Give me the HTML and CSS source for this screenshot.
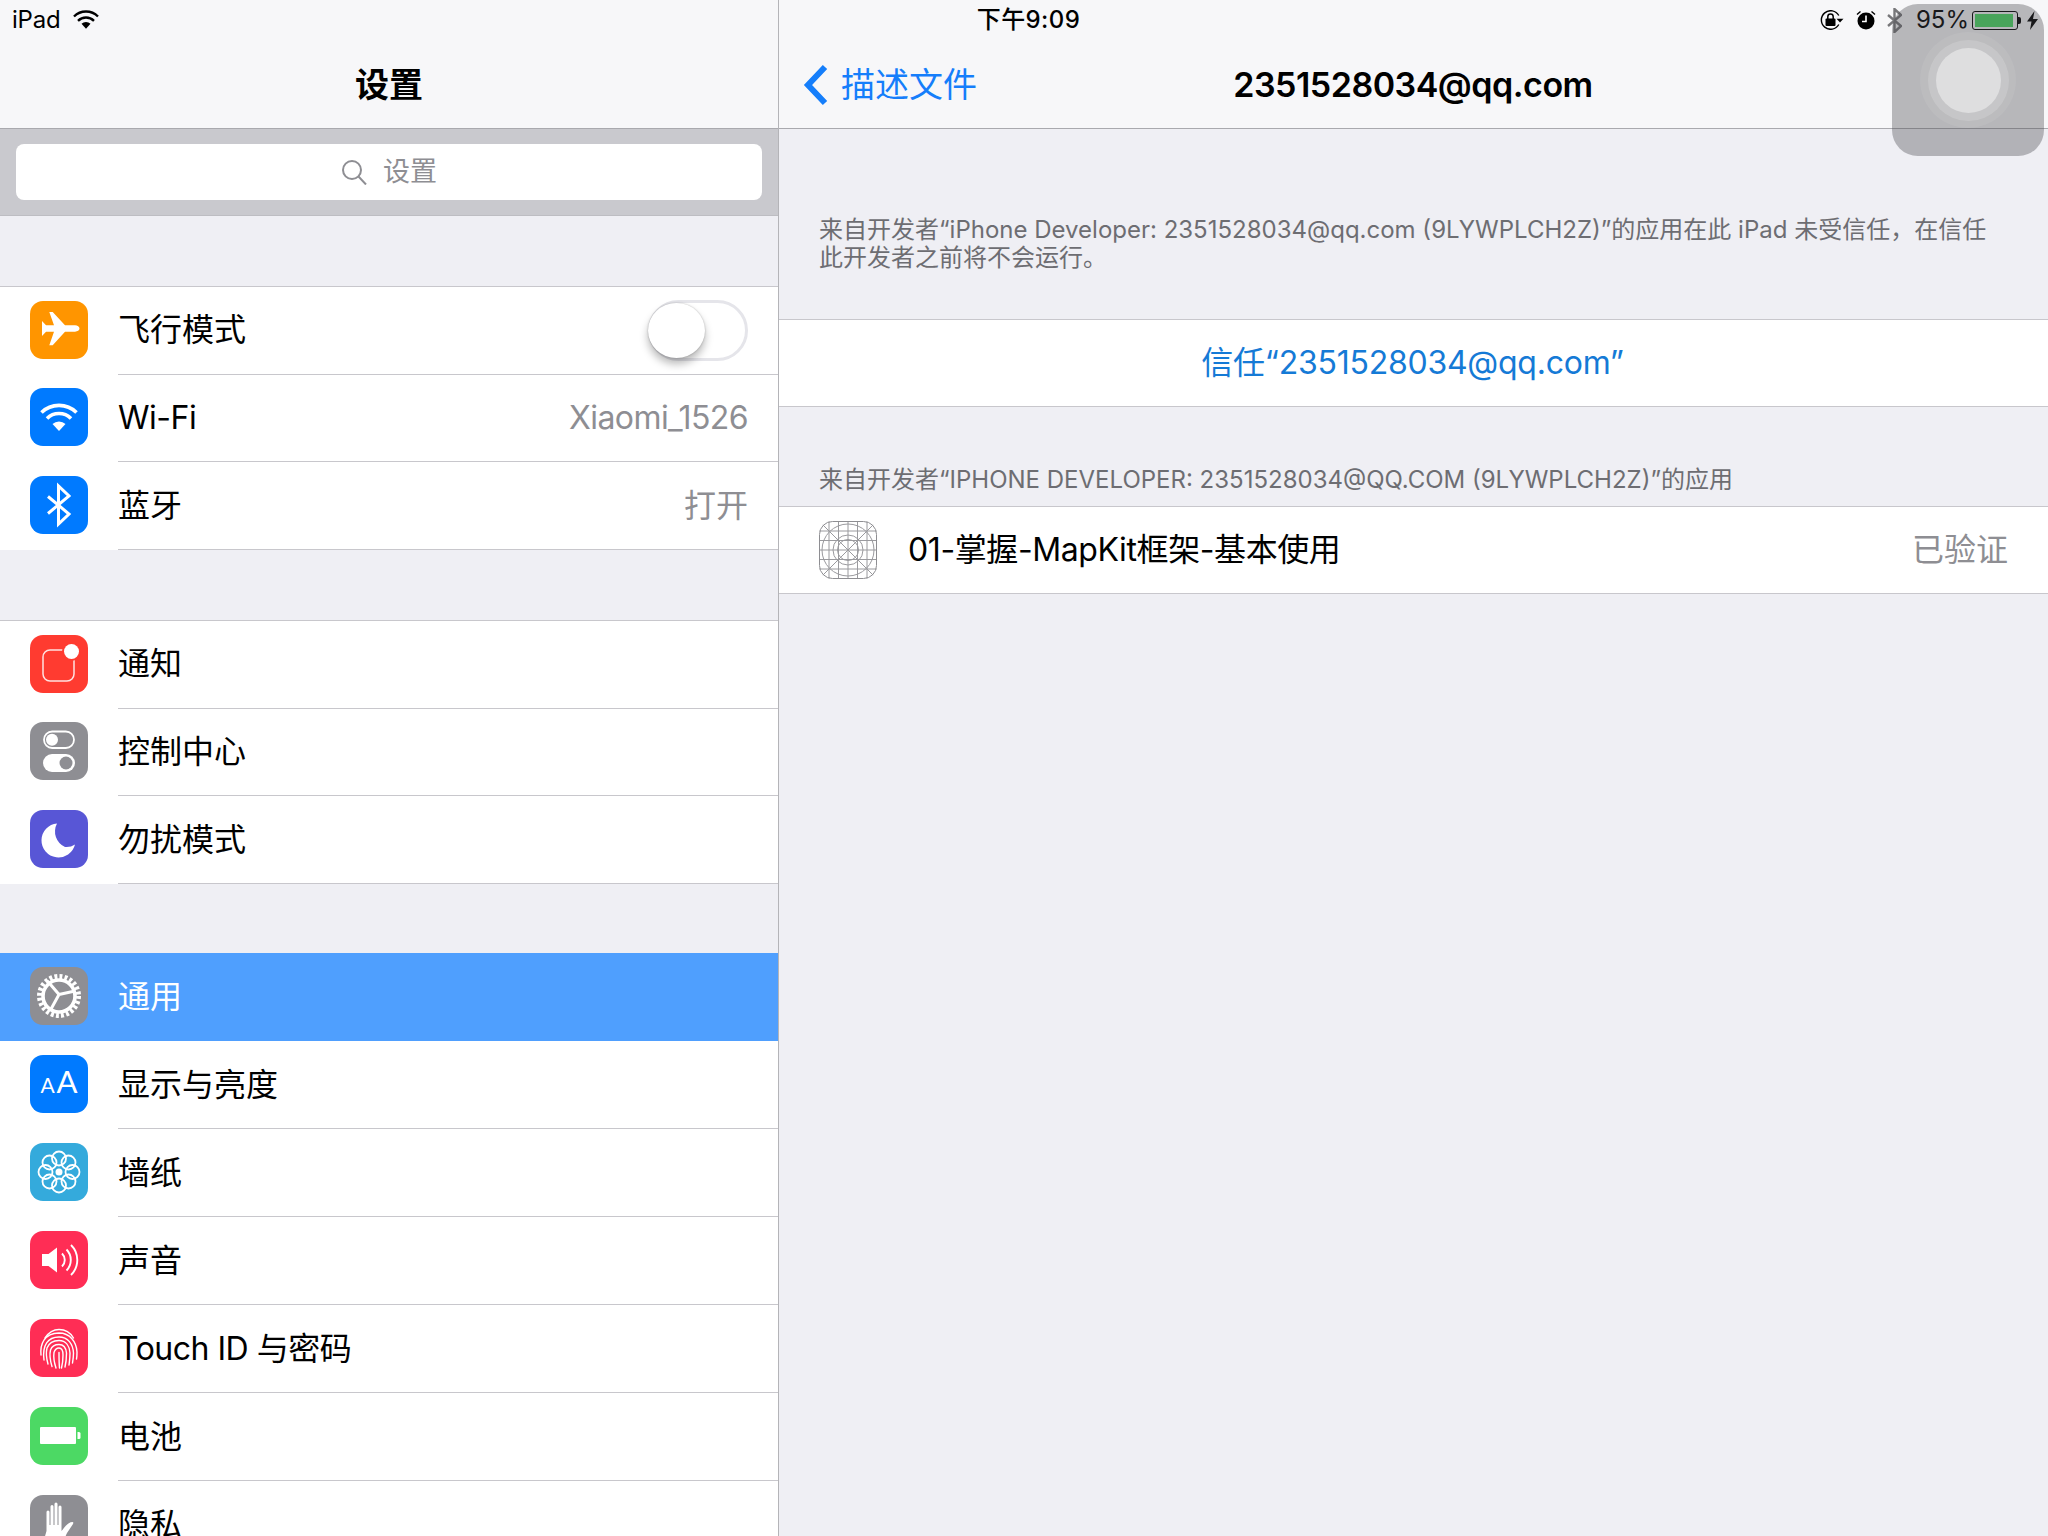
FILE: index.html
```html
<!DOCTYPE html>
<html lang="zh-CN">
<head>
<meta charset="utf-8">
<title>设置</title>
<link rel="stylesheet" href="styles.css">
</head>
<body>
<div class="screen">
  <aside class="master">
    <header class="nav nav-master"><h1 class="nav-title">设置</h1></header>
    <div class="search-wrap">
      <div class="search">
        <svg class="search-glass" viewBox="0 0 26 26"><circle cx="11" cy="11" r="9" fill="none" stroke="#8e8e93" stroke-width="2"/><path d="M17.5 17.500 25 25.500" stroke="#8e8e93" stroke-width="2" fill="none"/></svg>
        <span>设置</span>
      </div>
    </div>

    <section class="group">
      <div class="row">
        <svg class="icon" viewBox="0 0 58 58"><rect width="58" height="58" rx="13" fill="#ff9500"/><path d="M49.500 27.500c0-1.800-2-3-4.500-3.200H35L22.700 11h-3.400L24 24.300h-8L12 20v15l4-4.300h8L19.300 44.300h3.400L35 30.700h10c2.500-.2 4.500-1.400 4.500-3.200z" fill="#fff"/></svg>
        <div class="row-body"><span class="label">飞行模式</span><span class="toggle"><span class="knob"></span></span></div>
      </div>
      <div class="row">
        <svg class="icon" viewBox="0 0 58 58"><rect width="58" height="58" rx="13" fill="#007aff"/><g fill="none" stroke="#fff" stroke-width="3.600"><path d="M11.500 24.500a25 25 0 0 1 35 0"/><path d="M17 30.500a17 17 0 0 1 24 0"/></g><path d="M22.500 36a9.500 9.500 0 0 1 13 0L29 43z" fill="#fff"/></svg>
        <div class="row-body"><span class="label label-latin">Wi-Fi</span><span class="detail detail-latin">Xiaomi_1526</span></div>
      </div>
      <div class="row">
        <svg class="icon" viewBox="0 0 58 58"><rect width="58" height="58" rx="13" fill="#007aff"/><path d="M18 20.500 39 38 28.500 48V10L39 20 18 37.500" fill="none" stroke="#fff" stroke-width="3"/></svg>
        <div class="row-body"><span class="label">蓝牙</span><span class="detail">打开</span></div>
      </div>
    </section>

    <section class="group">
      <div class="row">
        <svg class="icon" viewBox="0 0 58 58"><rect width="58" height="58" rx="13" fill="#ff3b30"/><rect x="13" y="15" width="31" height="31" rx="7" fill="none" stroke="#fff" stroke-width="1.500" opacity=".85"/><circle cx="41.500" cy="16.500" r="9.500" fill="#ff3b30"/><circle cx="41.500" cy="16.500" r="7.500" fill="#fff"/></svg>
        <div class="row-body"><span class="label">通知</span></div>
      </div>
      <div class="row">
        <svg class="icon" viewBox="0 0 58 58"><rect width="58" height="58" rx="13" fill="#8e8e93"/><rect x="14" y="9.500" width="30" height="16.500" rx="8.200" fill="none" stroke="#fff" stroke-width="1.800"/><circle cx="22" cy="17.700" r="6" fill="#fff"/><rect x="13" y="32" width="32" height="18" rx="9" fill="#fff"/><circle cx="36" cy="41" r="6.500" fill="#8e8e93"/></svg>
        <div class="row-body"><span class="label">控制中心</span></div>
      </div>
      <div class="row">
        <svg class="icon" viewBox="0 0 58 58"><rect width="58" height="58" rx="13" fill="#5856d6"/><path d="M27 13.500A17 17 0 1 0 45 34.500 15 15 0 0 1 35 37 17 17 0 0 1 27 13.500z" fill="#fff"/></svg>
        <div class="row-body"><span class="label">勿扰模式</span></div>
      </div>
    </section>

    <section class="group group-selected">
      <div class="row row-88 row-selected">
        <svg class="icon" viewBox="0 0 58 58"><rect width="58" height="58" rx="13" fill="#8e8e93"/><circle cx="29" cy="29" r="19.500" fill="none" stroke="#fff" stroke-width="5" stroke-dasharray="2.900 2.200"/><circle cx="29" cy="29" r="16" fill="none" stroke="#fff" stroke-width="3.600"/><path d="M29 27.500 17.500 14M29 27.500 45 24M29 27.500 20.500 43" stroke="#fff" stroke-width="3" fill="none"/></svg>
        <div class="row-body"><span class="label">通用</span></div>
      </div>
      <div class="row row-88">
        <svg class="icon" viewBox="0 0 58 58"><rect width="58" height="58" rx="13" fill="#007aff"/><text x="17.500" y="38" class="aa aa-small">A</text><text x="37" y="38" class="aa aa-big">A</text></svg>
        <div class="row-body"><span class="label">显示与亮度</span></div>
      </div>
      <div class="row row-88">
        <svg class="icon" viewBox="0 0 58 58"><rect width="58" height="58" rx="13" fill="#34aadc"/><g fill="none" stroke="#fff" stroke-width="1.800"><circle cx="29" cy="15.500" r="7"/><circle cx="38.500" cy="19.500" r="7"/><circle cx="42.500" cy="29" r="7"/><circle cx="38.500" cy="38.500" r="7"/><circle cx="29" cy="42.500" r="7"/><circle cx="19.500" cy="38.500" r="7"/><circle cx="15.500" cy="29" r="7"/><circle cx="19.500" cy="19.500" r="7"/></g><circle cx="29" cy="29" r="3.500" fill="#fff"/></svg>
        <div class="row-body"><span class="label">墙纸</span></div>
      </div>
      <div class="row row-88">
        <svg class="icon" viewBox="0 0 58 58"><rect width="58" height="58" rx="13" fill="#ff2d55"/><path d="M12 23h6.500L27 16.500v25L18.500 35H12z" fill="#fff"/><g fill="none" stroke="#fff" stroke-width="1.900"><path d="M32 22.500a9 9 0 0 1 0 13"/><path d="M36.500 18.500a15 15 0 0 1 0 21"/><path d="M41 14a21 21 0 0 1 0 30"/></g></svg>
        <div class="row-body"><span class="label">声音</span></div>
      </div>
      <div class="row row-88">
        <svg class="icon" viewBox="0 0 58 58"><rect width="58" height="58" rx="13" fill="#ff2d55"/><g fill="none" stroke="#fff" stroke-width="1.400" stroke-linecap="round"><path d="M15 19C19 13 24 10.500 29 10.500 35 10.500 40 13 43.500 19"/><path d="M11 36C10 25 14 14.500 29 14 40 14 46.500 23 47 33 47 36 47 38 46.500 40"/><path d="M14 41C12 26 18 18 29 18 38 18 43 25 43.500 34 43.500 38 43 41 42.500 44"/><path d="M18 45C16 38 16 33 17 29 19 24 23 21.500 29 21.500 36 21.500 39.500 27 40 34 40 39 39.500 42 39 46"/><path d="M22 47.500C20 41 19.500 35 20.500 31 22 27 25 25.500 29 25.500 33.500 25.500 36 29 36.500 34 36.500 39 36 44 35 48"/><path d="M26 49C24 43 23.500 37 24 33.500 25 30.500 27 29 29 29 32 29 33 32 33 36 33 40 32.500 45 31.500 49"/><path d="M29 33.500C29 39 29 44 29.500 49"/></g></svg>
        <div class="row-body"><span class="label label-latin">Touch ID 与密码</span></div>
      </div>
      <div class="row row-88">
        <svg class="icon" viewBox="0 0 58 58"><rect width="58" height="58" rx="13" fill="#4cd964"/><rect x="10" y="20" width="36" height="17" rx="1" fill="#fff"/><path d="M47.500 25h1.500a1.500 1.500 0 0 1 1.500 1.500v4a1.500 1.500 0 0 1-1.500 1.500h-1.500z" fill="#fff"/></svg>
        <div class="row-body"><span class="label">电池</span></div>
      </div>
      <div class="row row-88">
        <svg class="icon" viewBox="0 0 58 58"><rect width="58" height="58" rx="13" fill="#8e8e93"/><path d="M16.500 36V17a1.500 1.500 0 0 1 3 0v13h1V11.500a1.500 1.500 0 0 1 3 0V30h1V9a1.500 1.500 0 0 1 3 0v21h1V12a1.500 1.500 0 0 1 3 0v24c2-2 6-9 11-9 1 0 1 1 .5 2l-6 9c-3 6-5 15-13 15-6 0-9.500-4-9.500-10z" fill="#fff"/></svg>
        <div class="row-body"><span class="label">隐私</span></div>
      </div>
    </section>
  </aside>

  <main class="detail-pane">
    <header class="nav nav-detail">
      <a class="back">
        <svg class="chevron" viewBox="0 0 26 42"><path d="M22 3 5 21l17 18" fill="none" stroke="#157efb" stroke-width="6"/></svg>
        <span>描述文件</span>
      </a>
      <h2 class="nav-title nav-title-detail">2351528034@qq.com</h2>
    </header>

    <p class="note">来自开发者“iPhone Developer: 2351528034@qq.com (9LYWPLCH2Z)”的应用在此 iPad 未受信任，在信任<br>此开发者之前将不会运行。</p>

    <div class="trust">信任“2351528034@qq.com”</div>

    <p class="section-head">来自开发者“IPHONE DEVELOPER: 2351528034@QQ.COM (9LYWPLCH2Z)”的应用</p>

    <div class="app-row">
      <svg class="app-icon" viewBox="0 0 58 58"><defs><clipPath id="app-clip"><rect width="58" height="58" rx="13"/></clipPath></defs><g fill="none" stroke="#9a9a9e" stroke-width="1" clip-path="url(#app-clip)"><circle cx="29" cy="29" r="26"/><circle cx="29" cy="29" r="15"/><circle cx="29" cy="29" r="10.500"/><path d="M0 0 58 58M58 0 0 58M29 0v58M0 29h58M10 0v58M48 0v58M0 10h58M0 48h58M19.500 0v58M38.500 0v58M0 19.500h58M0 38.500h58"/></g><rect x=".5" y=".5" width="57" height="57" rx="13" fill="none" stroke="#8e8e92" stroke-width="1"/></svg>
      <span class="app-name">01-掌握-MapKit框架-基本使用</span>
      <span class="verified">已验证</span>
    </div>
  </main>

  <div class="statusbar">
    <div class="status-left">
      <span>iPad</span>
      <svg class="st-wifi" viewBox="0 0 26 19"><g fill="none" stroke="#000" stroke-width="2.400"><path d="M1 6.500a17 17 0 0 1 24 0"/><path d="M5 10.800a11.500 11.500 0 0 1 16 0"/></g><path d="M8.500 13.800a6.500 6.500 0 0 1 9 0L13 18.800z"/></svg>
    </div>
    <div class="status-time">下午9:09</div>
    <div class="status-right">
      <svg class="st-lock" viewBox="0 0 24 20"><path d="M18.800 14.500A9.300 9.300 0 1 1 18.800 5.500" fill="none" stroke="#000" stroke-width="1.400"/><path d="M16.500 8.800h7l-3.500 3.800z"/><rect x="5.500" y="8.500" width="10" height="7.500" rx="1"/><path d="M7.800 9V6.800a2.700 2.700 0 0 1 5.400 0V9" fill="none" stroke="#000" stroke-width="1.500"/></svg>
      <svg class="st-alarm" viewBox="0 0 20 20"><circle cx="10" cy="11" r="8.500"/><path d="M10 5.500V11.500H6" fill="none" stroke="#fff" stroke-width="1.600"/><path d="M1 4.500 4.500 1.500M19 4.500 15.500 1.500" stroke="#000" stroke-width="1.400" fill="none"/></svg>
      <svg class="st-bt" viewBox="0 0 15 25"><path d="M1 7 14 18 7.500 24V1L14 7 1 18" fill="none" stroke="#77777a" stroke-width="2.400"/></svg>
      <span class="st-pct">95%</span>
      <span class="st-battery"><span class="st-fill"></span></span>
      <span class="st-tip"></span>
      <svg class="st-bolt" viewBox="0 0 11 19"><path d="M7.500 0 0 10.500h4.500L3 19l8-11H6z"/></svg>
    </div>
  </div>

  <div class="assistive">
    <div class="assist-outer"><div class="assist-mid"><div class="assist-inner"></div></div></div>
  </div>
</div>
</body>
</html>
```

FILE: styles.css
```css
* { box-sizing: border-box; margin: 0; padding: 0; }
html, body { width: 2048px; height: 1536px; overflow: hidden; }
body { font-family: "Inter", "Noto Sans CJK SC", sans-serif; color: #000; background: #efeff4; }

.screen { position: relative; width: 2048px; height: 1536px; display: flex; overflow: hidden; background: #efeff4; }

/* panes */
.master { width: 779px; height: 1536px; flex: none; border-right: 1px solid #b4b4b8; overflow: hidden; }
.detail-pane { flex: 1; min-width: 0; }

/* navigation bars */
.nav { height: 129px; background: #f7f7f9; border-bottom: 1px solid #a9a9ae; display: flex; align-items: center; padding-top: 41px; }
.nav-master { justify-content: center; }
.nav-title { font-size: 34px; font-weight: 600; line-height: 44px; }
.nav-detail { position: relative; padding-left: 24px; }
.back { display: flex; align-items: center; gap: 12px; color: #157efb; font-size: 34px; line-height: 44px; }
.chevron { width: 26px; height: 42px; flex: none; }
.nav-title-detail { flex: 1; text-align: center; padding-right: 199px; letter-spacing: -0.5px; }

/* search */
.search-wrap { height: 87px; padding: 15px 16px 16px; background: #c9c9ce; border-bottom: 1px solid #bdbdc2; }
.search { height: 56px; border-radius: 8px; background: #fff; display: flex; align-items: center; justify-content: center; gap: 16px; color: #8e8e93; font-size: 27px; line-height: 40px; }
.search-glass { width: 26px; height: 26px; }

/* table groups */
.group { margin-top: 70px; border-top: 1px solid #c8c7cc; background: #fff; }
.group-selected { border-top: 0; margin-top: 69px; }
.row { height: 87.67px; display: flex; align-items: center; padding-left: 30px; }
.row-88 { height: 88px; }
.icon { width: 58px; height: 58px; flex: none; margin: 0 30px 2px 0; }
.row-88 .icon { margin-bottom: 1px; }
.row-body { flex: 1; align-self: stretch; display: flex; align-items: center; justify-content: space-between; padding-right: 30px; border-bottom: 1px solid #c8c7cc; }
.row-88 .row-body { padding-top: 2px; }
.label { font-size: 32px; line-height: 44px; }
.label-latin { letter-spacing: -0.5px; }
.detail { font-size: 32px; line-height: 44px; color: #8e8e93; }
.detail-latin { letter-spacing: -0.6px; }
.row-selected { background: #4f9ffe; }
.row-selected .label { color: #fff; }
.row-selected .row-body { border-bottom-color: #4f9ffe; }
.aa { fill: #fff; font-family: "Lato", sans-serif; text-anchor: middle; }
.aa-small { font-size: 21px; }
.aa-big { font-size: 31px; }

/* switch */
.toggle { position: relative; width: 100px; height: 61px; border-radius: 31px; border: 3px solid #e5e5ea; background: #fff; }
.knob { position: absolute; left: -3px; top: 0; width: 57px; height: 55px; border-radius: 50%; background: #fff; box-shadow: 0 6px 8px rgba(0,0,0,.28), 0 0 2px rgba(0,0,0,.25); }

/* detail content */
.note { margin: 87px 40px 0; font-size: 24px; line-height: 28px; color: #6d6d72; white-space: nowrap; }
.trust { margin-top: 47px; height: 88px; padding-right: 2px; border-top: 1px solid #c8c7cc; border-bottom: 1px solid #c8c7cc; background: #fff; color: #157ad6; font-size: 32px; line-height: 44px; letter-spacing: -0.25px; display: flex; align-items: center; justify-content: center; }
.section-head { margin: 58px 40px 0; font-size: 24px; line-height: 30px; color: #6d6d72; white-space: nowrap; height: 41px; }
.app-row { height: 88px; background: #fff; border-top: 1px solid #c8c7cc; border-bottom: 1px solid #c8c7cc; display: flex; align-items: center; padding: 0 40px; }
.app-icon { width: 58px; height: 58px; flex: none; margin-right: 31px; }
.app-name { flex: 1; font-size: 32px; line-height: 44px; letter-spacing: -0.4px; }
.verified { font-size: 32px; line-height: 44px; color: #8e8e93; }

/* status bar */
.statusbar { position: absolute; left: 0; top: 0; width: 2048px; height: 40px; display: grid; grid-template-columns: 1fr auto 1fr; align-items: center; padding: 0 10px 0 12px; font-size: 24px; line-height: 40px; }
.status-left { display: flex; align-items: center; gap: 12px; letter-spacing: -0.2px; }
.st-wifi { width: 26px; height: 19px; margin-top: -2px; }
.status-time { font-weight: 500; padding-left: 7px; letter-spacing: 0.4px; }
.status-right { display: flex; align-items: center; justify-content: flex-end; }
.st-lock { width: 24px; height: 20px; margin-right: 12px; }
.st-alarm { width: 20px; height: 20px; margin-right: 11px; }
.st-bt { width: 15px; height: 25px; margin-right: 14px; }
.st-pct { margin-right: 3px; }
.st-battery { width: 46px; height: 19px; border: 1px solid #000; border-radius: 3px; padding: 2px; display: block; }
.st-fill { display: block; height: 100%; width: 95%; background: #4cd964; }
.st-tip { width: 3px; height: 7px; background: #000; border-radius: 0 2px 2px 0; margin-right: 6px; }
.st-bolt { width: 11px; height: 19px; }

/* assistive touch */
.assistive { position: absolute; left: 1892px; top: 4px; width: 152px; height: 152px; border-radius: 26px; background: rgba(70,70,74,.36); display: flex; align-items: center; justify-content: center; }
.assist-outer { width: 96px; height: 96px; border-radius: 50%; background: rgba(255,255,255,.07); display: flex; align-items: center; justify-content: center; }
.assist-mid { width: 81px; height: 81px; border-radius: 50%; background: rgba(255,255,255,.16); display: flex; align-items: center; justify-content: center; }
.assist-inner { width: 65px; height: 65px; border-radius: 50%; background: rgba(255,255,255,.42); }
```
